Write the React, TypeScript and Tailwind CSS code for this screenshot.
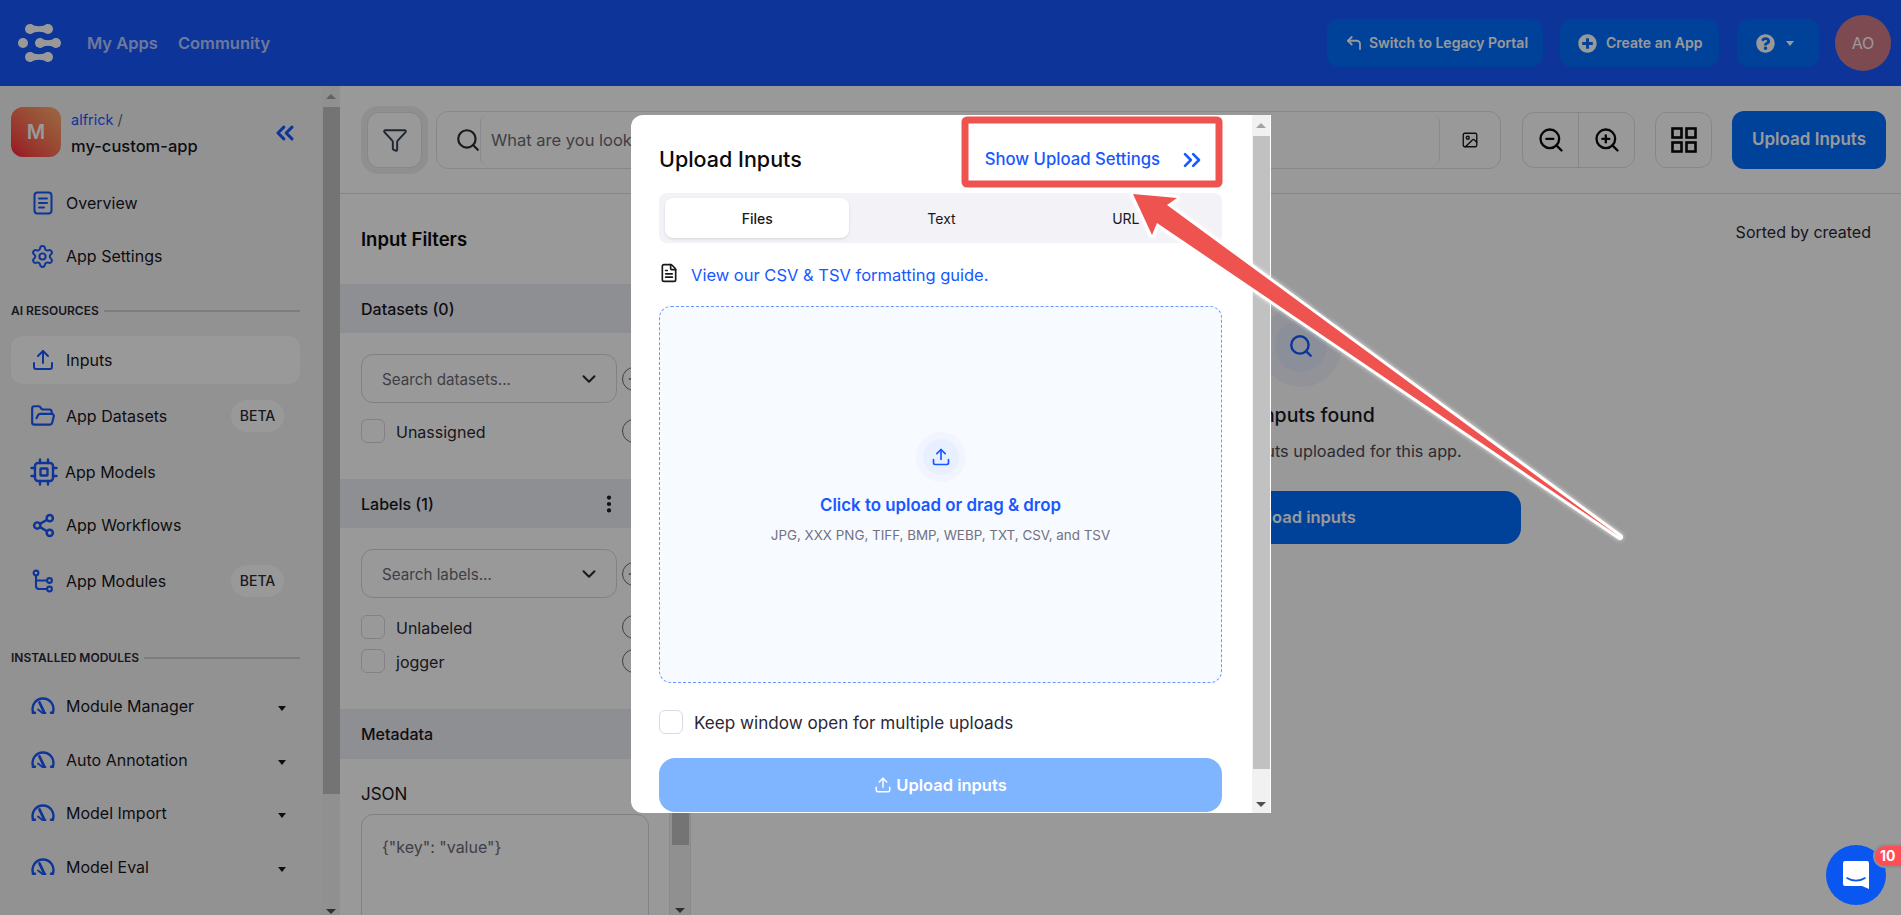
import {
  ChevronDown,
  ChevronsLeft,
  ChevronsRight,
  CornerUpLeft,
  FileText,
  Filter,
  FolderOpen,
  Image,
  MoreVertical,
  Plus,
  Search,
  Settings,
  Share2,
  Upload,
  ZoomIn,
  ZoomOut,
} from "lucide-react";
import { FaPlusCircle, FaQuestionCircle } from "react-icons/fa";
import type { ReactNode } from "react";

function Dumbbell({ x0, x1, cy }: { x0: number; x1: number; cy: number }) {
  const mid = (x0 + x1) / 2;
  return (
    <g>
      <circle cx={x0 + 5} cy={cy} r="5" />
      <circle cx={x1 - 5} cy={cy} r="5" />
      <path d={`M${x0 + 5} ${cy - 5}Q${mid} ${cy - 0.5} ${x1 - 5} ${cy - 5}V${cy + 5}Q${mid} ${cy + 0.5} ${x0 + 5} ${cy + 5}z`} />
    </g>
  );
}

function Logo() {
  return (
    <svg width="44" height="38" viewBox="0 0 44 38" fill="white">
      <Dumbbell x0={7} x1={35} cy={5} />
      <circle cx="5" cy="19" r="5" />
      <Dumbbell x0={17} x1={43} cy={19} />
      <Dumbbell x0={7} x1={35} cy={33} />
    </svg>
  );
}

function OverviewIcon() {
  return (
    <svg width="24" height="24" viewBox="0 0 24 24" fill="none" stroke="currentColor" strokeWidth="2" strokeLinecap="round">
      <rect x="3.500" y="1.500" width="17" height="21" rx="3" />
      <path d="M8 7.500h8M8 12h8M8 16.500h5" />
    </svg>
  );
}

function ModelsIcon() {
  return (
    <svg width="28" height="28" viewBox="0 0 28 28" fill="none" stroke="currentColor" strokeWidth="2.400" strokeLinecap="round">
      <rect x="5" y="5" width="18" height="18" rx="3" />
      <rect x="10.500" y="10.500" width="7" height="7" rx="0.500" />
      <path d="M10 1.500V5M18 1.500V5M10 23v3.500M18 23v3.500M1.500 10H5M1.500 18H5M23 10h3.500M23 18h3.500" />
    </svg>
  );
}

function ModulesIcon() {
  return (
    <svg width="24" height="24" viewBox="0 0 24 24" fill="none" stroke="currentColor" strokeWidth="2.100" strokeLinecap="round">
      <circle cx="5" cy="4" r="2.400" />
      <circle cx="18.500" cy="11.500" r="2.400" />
      <circle cx="18.500" cy="20" r="2.400" />
      <path d="M5 6.500V17a3 3 0 0 0 3 3h8M5 11.500h11" />
    </svg>
  );
}

function GaugeIcon() {
  return (
    <svg width="24" height="18" viewBox="0 0 24 18" fill="none" stroke="currentColor" strokeWidth="2.400" strokeLinecap="round">
      <path d="M2.200 15.500A10.400 10.400 0 0 1 12 1.500a10.400 10.400 0 0 1 9.800 14" />
      <path d="M1.800 15.800h2.200M20 15.800h2" />
      <path d="M8.500 5.500l4.500 9.500" strokeWidth="2.800" />
      <path d="M7 12.500l4.500 3.500h3" strokeWidth="1.800" />
    </svg>
  );
}

function GridIcon() {
  return (
    <svg width="26" height="26" viewBox="0 0 26 26" fill="none" stroke="currentColor" strokeWidth="2.600">
      <rect x="1.500" y="1.500" width="9" height="9" />
      <rect x="15.500" y="1.500" width="9" height="9" />
      <rect x="1.500" y="15.500" width="9" height="9" />
      <rect x="15.500" y="15.500" width="9" height="9" />
    </svg>
  );
}

function NavItem({
  icon,
  label,
  beta,
  caret,
  active,
  className,
}: {
  icon: ReactNode;
  label: string;
  beta?: boolean;
  caret?: boolean;
  active?: boolean;
  className?: string;
}) {
  return (
    <div
      className={`flex h-12 items-center rounded-xl pl-5 pr-4 ${active ? "bg-white" : ""} ${className ?? ""}`}
    >
      <span className="flex w-[35px] shrink-0 text-[#1758ff]">{icon}</span>
      <span className="flex-1 text-base text-[#18171c]">{label}</span>
      {beta && (
        <span className="flex h-8 w-[53px] items-center justify-center rounded-full bg-white text-sm font-medium text-[#2b2a33]">
          BETA
        </span>
      )}
      {caret && <span className="-mr-[2px] mt-1 h-0 w-0 border-x-[4.500px] border-t-[5px] border-x-transparent border-t-[#18171c]" />}
    </div>
  );
}

function SectionTitle({ label }: { label: string }) {
  return (
    <div className="flex items-center gap-[5px]">
      <span className="text-xs font-semibold text-[#2a2833]">{label}</span>
      <span className="h-[2px] flex-1 bg-[#d0d0d2]" />
    </div>
  );
}

function Scrollbar({ thumbClass }: { thumbClass: string }) {
  return (
    <div className="flex h-full w-full flex-col items-center bg-[#f1f1f1]">
      <div className="flex h-[21px] shrink-0 items-center">
        <span className="h-0 w-0 border-x-[5px] border-b-[5px] border-x-transparent border-b-[#a3a3a3]" />
      </div>
      <div className={`w-[17px] bg-[#c1c1c1] ${thumbClass}`} />
      <div className="flex-1" />
      <div className="flex h-[17px] shrink-0 items-center">
        <span className="h-0 w-0 border-x-[5px] border-t-[5px] border-x-transparent border-t-[#505050]" />
      </div>
    </div>
  );
}

function Sidebar() {
  return (
    <aside className="flex h-full w-[340px] shrink-0 bg-[#f4f4f6]">
      <div className="w-[322px] shrink-0 pl-[11px] pr-[22px] pt-[21px]">
        <div className="flex h-[50px] items-center">
          <div className="flex h-[50px] w-[50px] items-center justify-center rounded-xl bg-gradient-to-tr from-[#ff0a3c] to-[#ffb070] text-xl font-semibold text-white">
            M
          </div>
          <div className="ml-[10px] flex-1 pt-px">
            <div className="text-[14.500px] leading-[26px] text-[#1758ff]">
              alfrick <span className="text-[#6b6a75]">/</span>
            </div>
            <div className="text-[16.500px] font-medium leading-[26px] text-[#18171c]">my-custom-app</div>
          </div>
          <ChevronsLeft size={28} strokeWidth={2.600} className="mr-[1px] mt-px text-[#1758ff]" />
        </div>
        <NavItem icon={<OverviewIcon />} label="Overview" className="mt-[22px]" />
        <NavItem icon={<Settings size={25} strokeWidth={1.900} className="-ml-[1px]" />} label="App Settings" className="mt-[5px]" />
        <div className="mt-[23px]">
          <SectionTitle label="AI RESOURCES" />
        </div>
        <NavItem active icon={<Upload size={24} strokeWidth={2} />} label="Inputs" className="mt-[17px]" />
        <NavItem beta icon={<FolderOpen size={26} strokeWidth={2} className="-ml-[1px]" />} label="App Datasets" className="mt-[8px]" />
        <NavItem icon={<ModelsIcon />} label="App Models" className="mt-[8px] -ml-px" />
        <NavItem icon={<Share2 size={25} strokeWidth={2.400} />} label="App Workflows" className="mt-[5px]" />
        <NavItem beta icon={<ModulesIcon />} label="App Modules" className="mt-2" />
        <div className="mt-[45px]">
          <SectionTitle label="INSTALLED MODULES" />
        </div>
        <NavItem caret icon={<GaugeIcon />} label="Module Manager" className="mt-[16px]" />
        <NavItem caret icon={<GaugeIcon />} label="Auto Annotation" className="mt-[6px]" />
        <NavItem caret icon={<GaugeIcon />} label="Model Import" className="mt-[5px]" />
        <NavItem caret icon={<GaugeIcon />} label="Model Eval" className="mt-[6px]" />
      </div>
      <div className="h-[834px] w-[18px] shrink-0">
        <Scrollbar thumbClass="h-[687px]" />
      </div>
    </aside>
  );
}

function TopBar() {
  return (
    <div className="flex h-[108px] shrink-0 items-center border-b border-[#dedee2] bg-white pl-[27px]">
      <button className="flex h-14 w-[55px] shrink-0 items-center justify-center rounded-xl border border-[#e2e2e6] bg-white text-[#344054] ring-[6px] ring-[#eeeef3]">
        <Filter size={26} strokeWidth={1.800} />
      </button>
      <div className="ml-[14px] flex h-[58px] w-[1065px] items-center rounded-xl border border-[#e2e2e6]">
        <div className="flex w-[43px] justify-end">
          <Search size={26} strokeWidth={2} className="mr-[-1px] text-[#2b2a33]" />
        </div>
        <div className="flex h-full flex-1 items-center rounded-xl border border-y-0 border-[#e6e6ea] pl-[10px] pt-[2px] text-[16.500px] text-[#6b6a75]">
          What are you looking for?
        </div>
        <div className="flex w-[60px] justify-center">
          <Image size={18} strokeWidth={1.800} className="text-[#18171c]" />
        </div>
      </div>
      <div className="ml-[21px] flex h-[56px] w-[113px] rounded-xl border border-[#e2e2e6] text-[#0b0b0d]">
        <div className="flex flex-1 items-center justify-center border-r border-[#dedee2]">
          <ZoomOut size={28} strokeWidth={2} />
        </div>
        <div className="flex flex-1 items-center justify-center">
          <ZoomIn size={28} strokeWidth={2} />
        </div>
      </div>
      <div className="ml-[20px] flex h-[56px] w-[57px] items-center justify-center rounded-xl border border-[#e2e2e6] text-[#0b0b0d]">
        <GridIcon />
      </div>
      <button className="ml-[20px] h-[58px] w-[154px] rounded-xl bg-[#006eff] text-[17px] font-semibold text-white">
        Upload Inputs
      </button>
    </div>
  );
}

function CheckRow({ label, className }: { label: string; className?: string }) {
  return (
    <div className={`flex h-6 w-[285px] items-center ${className ?? ""}`}>
      <span className="h-6 w-6 rounded-md border border-[#d8d8e0]" />
      <span className="ml-[11px] flex-1 pt-[2px] text-base text-[#2a2833]">{label}</span>
      <span className="h-6 w-6 rounded-full border border-[#6b6a75]" />
    </div>
  );
}

function SearchSelect({ placeholder }: { placeholder: string }) {
  return (
    <div className="flex items-center">
      <div className="flex h-[49px] w-[256px] items-center justify-between rounded-xl border border-[#d8d8e0] pl-[20px] pr-[16px] text-[15.200px] text-[#6b6a75]">
        <span className="pt-[3px]">{placeholder}</span>
        <ChevronDown size={22} strokeWidth={2.200} className="text-[#2b2a33]" />
      </div>
      <span className="ml-[5px] flex h-6 w-6 items-center justify-center rounded-full border border-[#6b6a75] text-[#6b6a75]">
        <Plus size={16} />
      </span>
    </div>
  );
}

function FilterPanel() {
  return (
    <div className="flex h-full w-[351px] shrink-0 bg-white">
      <div className="w-[329px] shrink-0">
        <div className="flex h-[90px] items-center pl-[21px] pt-[2px] text-[18.500px] font-semibold text-[#0b0b0d]">Input Filters</div>
        <div className="flex h-[49px] items-center bg-[#edeef5] pl-[21px] text-base font-medium text-[#18171c]">
          Datasets (0)
        </div>
        <div className="pl-[21px] pt-[21px]">
          <SearchSelect placeholder="Search datasets..." />
          <CheckRow label="Unassigned" className="mt-4" />
        </div>
        <div className="mt-[36px] flex h-[49px] items-center justify-between bg-[#edeef5] pl-[21px] pr-[49px] text-base font-medium text-[#18171c]">
          Labels (1)
          <MoreVertical size={22} strokeWidth={2.600} />
        </div>
        <div className="pl-[21px] pt-[21px]">
          <SearchSelect placeholder="Search labels..." />
          <CheckRow label="Unlabeled" className="mt-[17px]" />
          <CheckRow label="jogger" className="mt-[10px]" />
        </div>
        <div className="mt-[36px] flex h-[50px] items-center bg-[#edeef5] pl-[21px] text-base font-medium text-[#18171c]">
          Metadata
        </div>
        <div className="pl-[21px]">
          <div className="mt-[23px] h-6 text-[17px] text-[#18171c]">JSON</div>
          <div className="mt-2 h-[200px] w-[288px] rounded-xl border border-[#d8d8e0] px-[20px] pt-[20px] text-base text-[#6b6a75]">
            {'{"key": "value"}'}
          </div>
        </div>
      </div>
      <div className="h-[725px] w-[22px] shrink-0 border-x border-[#e6e6e6]">
        <Scrollbar thumbClass="h-[630px]" />
      </div>
    </div>
  );
}

function EmptyState() {
  return (
    <div className="flex-1 bg-white">
      <div className="pr-[30px] pt-[26px] text-right text-base leading-6 text-[#2a2833]">Sorted by created</div>
      <div className="mt-[61px] flex flex-col items-center pl-[9px]">
        <div className="flex h-[82px] w-[82px] items-center justify-center rounded-full bg-[#f3f6ff]">
          <div className="flex h-[52px] w-[52px] items-center justify-center rounded-full bg-[#e8efff]">
            <Search size={26} strokeWidth={2.200} className="text-[#1758ff]" />
          </div>
        </div>
        <div className="mt-[15px] text-[19.500px] font-medium leading-[26px] text-[#18171c]">No inputs found</div>
        <div className="mt-[11px] text-[16.300px] leading-6 text-[#4b4a55]">There are no inputs uploaded for this app.</div>
        <button className="mt-[28px] flex h-[53px] w-[440px] items-center justify-center rounded-2xl bg-[#006eff] text-[16.500px] font-semibold text-white">
          Upload inputs
        </button>
      </div>
    </div>
  );
}

function UploadModal() {
  return (
    <div className="absolute left-[631px] top-[115px] flex h-[698px] w-[640px] overflow-hidden rounded-l-xl bg-white">
      <div className="w-[620px] shrink-0 pl-[28px] pr-[29px] pt-[28px]">
        <div className="flex h-8 items-center justify-between pr-[16px]">
          <h2 className="pt-px text-[21.500px] font-medium text-[#0b0b0d]">Upload Inputs</h2>
          <div className="flex items-center pt-[2px] text-[#1758ff]">
            <span className="text-[16.700px] font-medium">Show Upload Settings</span>
            <ChevronsRight size={28} strokeWidth={2.200} className="ml-[18px]" />
          </div>
        </div>
        <div className="mt-[18px] grid h-[50px] grid-cols-3 rounded-lg bg-[#f3f2f7] py-[5px] pl-[6px] pr-[4px] text-sm text-[#18171c]">
          <div className="flex items-center justify-center rounded-lg bg-white pt-px font-medium shadow-sm">Files</div>
          <div className="flex items-center justify-center pt-px">Text</div>
          <div className="flex items-center justify-center pt-px">URL</div>
        </div>
        <div className="mt-5 flex h-6 items-center">
          <FileText size={20} strokeWidth={2} className="-mt-1 text-[#18171c]" />
          <span className="ml-[12px] text-[16.500px] text-[#1758ff]">View our CSV &amp; TSV formatting guide.</span>
        </div>
        <div className="mt-[19px] flex h-[377px] flex-col items-center rounded-xl border border-dashed border-[#6f98ff] bg-[#f7faff]">
          <div className="mt-[125px] flex h-[50px] w-[50px] items-center justify-center rounded-full bg-[#f2f5ff]">
            <div className="flex h-9 w-9 items-center justify-center rounded-full bg-[#e8efff]">
              <Upload size={20} strokeWidth={2} className="text-[#1758ff]" />
            </div>
          </div>
          <div className="mt-[11px] text-[16.850px] font-semibold leading-6 text-[#1758ff]">Click to upload or drag &amp; drop</div>
          <div className="mt-2 text-[13.400px] leading-5 text-[#71717f]">JPG, XXX PNG, TIFF, BMP, WEBP, TXT, CSV, and TSV</div>
        </div>
        <div className="mt-[27px] flex h-6 items-center">
          <span className="h-6 w-6 rounded-md border border-[#dbd9e6]" />
          <span className="ml-[11px] pt-[2px] text-[17.100px] text-[#2a2833]">Keep window open for multiple uploads</span>
        </div>
        <button className="mt-[24px] flex h-[54px] w-full items-center justify-center gap-1 rounded-2xl bg-[#7fb4ff] text-[16.500px] font-semibold text-white">
          <Upload size={18} strokeWidth={2} />
          Upload inputs
        </button>
      </div>
      <div className="h-full w-5 shrink-0 px-px">
        <Scrollbar thumbClass="h-[633px]" />
      </div>
    </div>
  );
}

// the red callout drawn on top of the screenshot
function Annotation() {
  return (
    <svg className="pointer-events-none absolute inset-0" width="1901" height="915" viewBox="0 0 1901 915">
      <rect x="965" y="120" width="254" height="64" rx="2" fill="none" stroke="white" strokeWidth="9" />
      <rect x="965" y="120" width="254" height="64" rx="2" fill="none" stroke="#ef5350" strokeWidth="7" />
      <polygon
        points="1133,194 1177,198 1167,205 1620,537 1157,223 1152,235"
        fill="#ef5350"
        stroke="white"
        strokeWidth="6"
        strokeLinejoin="round"
        paintOrder="stroke"
        className="drop-shadow-[0_0_2px_rgba(255,255,255,0.8)]"
      />
    </svg>
  );
}

function ChatBubble() {
  return (
    <div className="absolute left-[1826px] top-[845px] flex h-[60px] w-[60px] items-center justify-center rounded-full bg-[#0a56f0]">
      <svg width="28" height="30" viewBox="0 0 28 30">
        <path d="M3 1h22a2 2 0 0 1 2 2v26l-7-3H3a2 2 0 0 1-2-2V3a2 2 0 0 1 2-2z" fill="white" />
        <path d="M5 18c5 3.500 13 3.500 18 0" fill="none" stroke="#0a56f0" strokeWidth="1.600" strokeLinecap="round" />
      </svg>
      <span className="absolute left-[49px] top-[1px] flex h-5 w-9 items-center rounded-full bg-[#ff4d55] pl-[5px] text-sm font-bold text-white ring-2 ring-[#8f8f8f]">
        10
      </span>
    </div>
  );
}

export default function App() {
  return (
    <div className="relative h-[915px] w-[1901px] overflow-hidden bg-white font-[Inter,sans-serif]">
      <header className="flex h-[86px] items-center bg-[#1758ff] pl-[18px] pr-[10px]">
        <Logo />
        <nav className="ml-[25px] flex gap-[20px] text-[16.500px] font-semibold text-white/70">
          <span>My Apps</span>
          <span>Community</span>
        </nav>
        <div className="ml-auto flex items-center text-sm font-semibold text-white">
          <div className="flex h-12 w-[216px] items-center rounded-xl bg-[#006eff] pl-[18px]">
            <CornerUpLeft size={18} strokeWidth={2.400} />
            <span className="ml-[6px]">Switch to Legacy Portal</span>
          </div>
          <div className="ml-[17px] flex h-12 w-[159px] items-center rounded-xl bg-[#006eff] pl-[18px]">
            <FaPlusCircle size={19} />
            <span className="ml-[9px]">Create an App</span>
          </div>
          <div className="ml-[18px] flex h-12 w-[82px] items-center rounded-xl bg-[#006eff] pl-[19px]">
            <FaQuestionCircle size={19} />
            <span className="ml-[11px] h-0 w-0 border-x-[4.500px] border-t-[5px] border-x-transparent border-t-white" />
          </div>
          <div className="ml-4 flex h-14 w-14 items-center justify-center rounded-full bg-[#d37c89] text-base font-normal text-white">
            AO
          </div>
        </div>
      </header>
      <div className="flex h-[829px]">
        <Sidebar />
        <main className="flex min-w-0 flex-1 flex-col">
          <TopBar />
          <div className="flex min-h-0 flex-1">
            <FilterPanel />
            <EmptyState />
          </div>
        </main>
      </div>
      <div className="absolute inset-0 bg-black/40" />
      <UploadModal />
      <Annotation />
      <ChatBubble />
    </div>
  );
}
